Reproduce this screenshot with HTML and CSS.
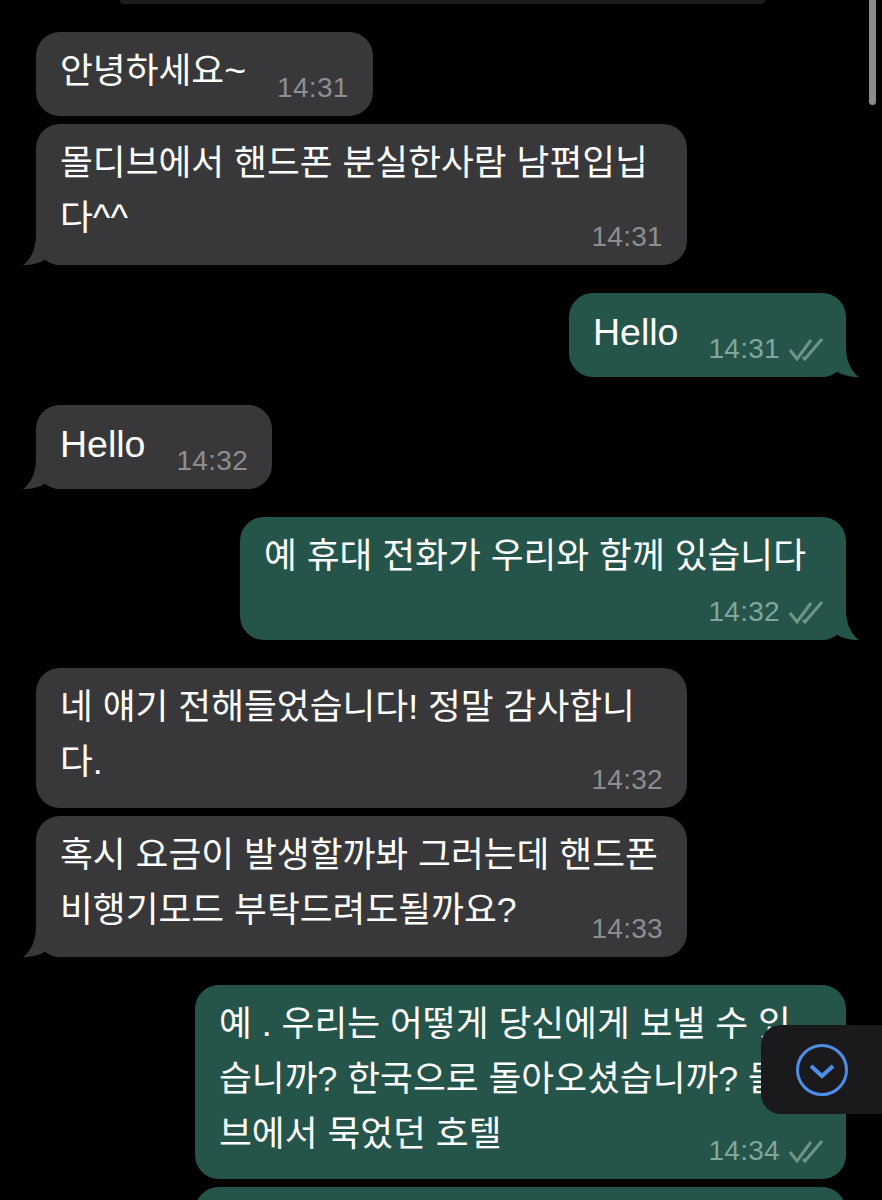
FILE: index.html
```html
<!DOCTYPE html>
<html lang="ko">

<head>
    <meta charset="UTF-8">
    <meta name="viewport" content="width=device-width, initial-scale=1.0">
    <title>Chat</title>
    <link rel="stylesheet" href="styles.css">
</head>

<body>
    <div class="scrollbar"></div>

    <div class="chat">
        <div class="prev-bubble"></div>

        <div class="group">
            <div class="bubble in inline">
                <div class="text">안녕하세요<span class="latin">~</span></div>
                <div class="meta"><span class="time">14:31</span></div>
            </div>
            <div class="bubble in wide">
                <div class="text short">몰디브에서 핸드폰 분실한사람 남편입닙<br>다<span class="latin">^^</span></div>
                <div class="meta"><span class="time">14:31</span></div>
                <svg class="tail" viewBox="0 0 37 30"><path d="M13 0C13 15 7 25 0 30C9 30 17 28 23 24C27 28 32 30 37 30L37 0Z" /></svg>
            </div>
        </div>

        <div class="group">
            <div class="bubble out inline">
                <div class="text english">Hello</div>
                <div class="meta">
                    <span class="time">14:31</span>
                    <svg class="ticks" viewBox="0 0 34 23"><path d="M1 12L8 21L22 2M14 19L16 21L33 1" /></svg>
                </div>
                <svg class="tail" viewBox="0 0 37 30"><path d="M13 0C13 15 7 25 0 30C9 30 17 28 23 24C27 28 32 30 37 30L37 0Z" /></svg>
            </div>
        </div>

        <div class="group">
            <div class="bubble in inline">
                <div class="text english">Hello</div>
                <div class="meta"><span class="time">14:32</span></div>
                <svg class="tail" viewBox="0 0 37 30"><path d="M13 0C13 15 7 25 0 30C9 30 17 28 23 24C27 28 32 30 37 30L37 0Z" /></svg>
            </div>
        </div>

        <div class="group">
            <div class="bubble out">
                <div class="text tall">예 휴대 전화가 우리와 함께 있습니다</div>
                <div class="meta">
                    <span class="time">14:32</span>
                    <svg class="ticks" viewBox="0 0 34 23"><path d="M1 12L8 21L22 2M14 19L16 21L33 1" /></svg>
                </div>
                <svg class="tail" viewBox="0 0 37 30"><path d="M13 0C13 15 7 25 0 30C9 30 17 28 23 24C27 28 32 30 37 30L37 0Z" /></svg>
            </div>
        </div>

        <div class="group">
            <div class="bubble in wide">
                <div class="text snug">네 얘기 전해들었습니다! 정말 감사합니<br>다.</div>
                <div class="meta"><span class="time">14:32</span></div>
            </div>
            <div class="bubble in wide">
                <div class="text short">혹시 요금이 발생할까봐 그러는데 핸드폰<br>비행기모드 부탁드려도될까요?</div>
                <div class="meta"><span class="time">14:33</span></div>
                <svg class="tail" viewBox="0 0 37 30"><path d="M13 0C13 15 7 25 0 30C9 30 17 28 23 24C27 28 32 30 37 30L37 0Z" /></svg>
            </div>
        </div>

        <div class="group">
            <div class="bubble out wide">
                <div class="text">예 . 우리는 어떻게 당신에게 보낼 수 있<br>습니까? 한국으로 돌아오셨습니까? 몰<br>브에서 묵었던 호텔</div>
                <div class="meta">
                    <span class="time">14:34</span>
                    <svg class="ticks" viewBox="0 0 34 23"><path d="M1 12L8 21L22 2M14 19L16 21L33 1" /></svg>
                </div>
            </div>
            <div class="bubble out wide next-bubble"></div>
        </div>
    </div>

    <div class="scroll-down">
        <svg viewBox="0 0 54 54">
            <circle cx="27" cy="27" r="24.5" />
            <path d="M16 23L27 33L38 23" />
        </svg>
    </div>
</body>

</html>
```

FILE: styles.css
```css
* {
    box-sizing: border-box;
    margin: 0;
    padding: 0;
}

html,
body {
    height: 1200px;
    overflow: hidden;
    background: #000;
}

body {
    position: relative;
    font-family: "Liberation Sans", "Noto Sans CJK KR", sans-serif;
    color: #fff;
}

.chat {
    display: flex;
    flex-direction: column;
    gap: 28px;
    padding: 0 36px;
}

.prev-bubble {
    align-self: flex-start;
    width: 645px;
    height: 4px;
    margin-left: 84px;
    background: #1c1c1e;
    border-radius: 0 0 22px 22px;
}

.group {
    display: flex;
    flex-direction: column;
    gap: 8px;
}

.bubble {
    position: relative;
    display: grid;
    width: fit-content;
    padding: 12px 24px 0;
    border-radius: 24px;
}

.bubble.in {
    align-self: flex-start;
    background: #38383a;
    fill: #38383a;
}

.bubble.out {
    align-self: flex-end;
    padding-right: 23px;
    background: #25544a;
    fill: #25544a;
}

.bubble.wide {
    width: 651px;
}

.bubble.inline {
    grid-template-columns: auto auto;
    column-gap: 31px;
}

.bubble.out.inline {
    column-gap: 30px;
}

.text {
    grid-area: 1 / 1;
    font-size: 35.7px;
    line-height: 55px;
    padding-bottom: 17px;
    white-space: nowrap;
}

.text.short {
    padding-bottom: 19px;
}

.text.snug {
    padding-bottom: 18px;
}

.text.tall {
    padding-right: 17px;
    padding-bottom: 56px;
}

.text.english {
    font-size: 37.5px;
}

.latin {
    font-size: 37.5px;
    line-height: 0;
}

.meta {
    grid-area: 1 / 1;
    justify-self: end;
    align-self: end;
    display: flex;
    align-items: center;
    gap: 9px;
    height: 28px;
    margin-bottom: 14px;
}

.bubble.inline .meta {
    grid-area: 1 / 2;
}

.time {
    font-family: "Liberation Sans", sans-serif;
    font-size: 28px;
    line-height: 28px;
    letter-spacing: 0.3px;
    color: #8e8e90;
}

.out .time {
    color: #7fa79c;
}

.ticks {
    width: 34px;
    height: 23px;
    fill: none;
    stroke: #6c9489;
    stroke-width: 3;
}

.tail {
    position: absolute;
    left: -13px;
    bottom: 0;
    width: 37px;
    height: 30px;
}

.out .tail {
    left: auto;
    right: -13px;
    transform: scaleX(-1);
}

.next-bubble {
    height: 60px;
}

.scrollbar {
    position: absolute;
    top: -10px;
    left: 869px;
    width: 7px;
    height: 115px;
    background: #8a8a8a;
    border-radius: 4px;
}

.scroll-down {
    position: absolute;
    top: 1025px;
    left: 761px;
    width: 121px;
    height: 89px;
    display: flex;
    align-items: center;
    padding-left: 34px;
    background: #1a1a1c;
    border-radius: 20px 0 0 20px;
}

.scroll-down svg {
    width: 54px;
    height: 54px;
    fill: none;
    stroke: #4d8fe8;
}

.scroll-down circle {
    stroke-width: 3;
}

.scroll-down path {
    stroke-width: 4;
}
```
